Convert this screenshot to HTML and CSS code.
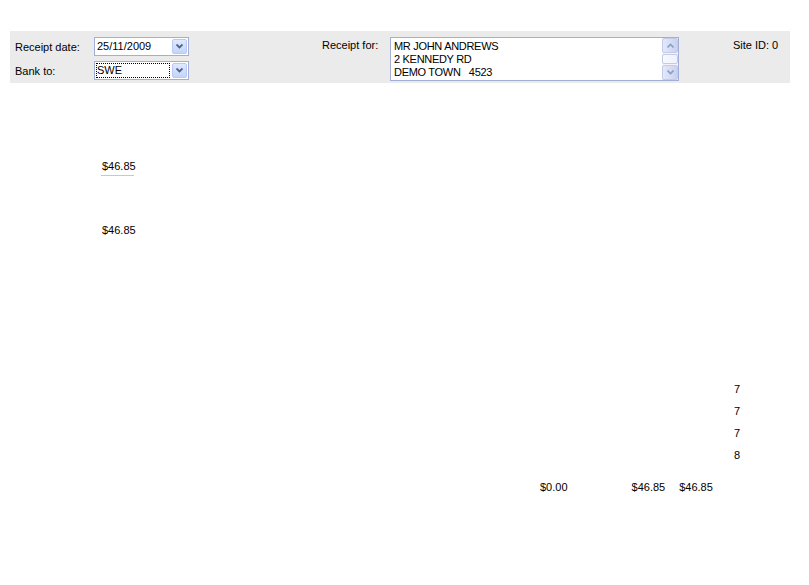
FILE: index.html
```html
<!DOCTYPE html>
<html>
<head>
<meta charset="utf-8">
<link rel="stylesheet" href="styles.css">
</head>
<body>
<div class="page">
  <div class="band">
    <div class="left-group">
      <div class="row">
        <span class="label">Receipt date:</span>
        <div class="combo">
          <span class="combo-text">25/11/2009</span>
          <span class="drop"><svg width="7" height="5" viewBox="0 0 7 5"><path d="M0.5 0.5 L3.5 3.5 L6.5 0.5" fill="none" stroke="#4d6185" stroke-width="1.8"/></svg></span>
        </div>
      </div>
      <div class="row">
        <span class="label">Bank to:</span>
        <div class="combo">
          <span class="combo-text focus">SWE</span>
          <span class="drop"><svg width="7" height="5" viewBox="0 0 7 5"><path d="M0.5 0.5 L3.5 3.5 L6.5 0.5" fill="none" stroke="#4d6185" stroke-width="1.8"/></svg></span>
        </div>
      </div>
    </div>
    <div class="mid-group">
      <span class="label">Receipt for:</span>
      <div class="memo">
        <div class="memo-text">MR JOHN ANDREWS<br>2 KENNEDY RD<br>DEMO TOWN&nbsp;&nbsp; 4523</div>
        <div class="scroll">
          <span class="sbtn"><svg width="7" height="5" viewBox="0 0 7 5"><path d="M0.5 4.5 L3.5 1.5 L6.5 4.5" fill="none" stroke="#8e9cc8" stroke-width="1.6"/></svg></span>
          <span class="thumb"></span>
          <span class="sbtn"><svg width="7" height="5" viewBox="0 0 7 5"><path d="M0.5 0.5 L3.5 3.5 L6.5 0.5" fill="none" stroke="#8e9cc8" stroke-width="1.6"/></svg></span>
        </div>
      </div>
    </div>
    <div class="site">Site ID: 0</div>
  </div>

  <div class="amounts">
    <div class="amt underline">$46.85</div>
    <div class="amt second">$46.85</div>
  </div>

  <div class="counts">
    <div>7</div>
    <div>7</div>
    <div>7</div>
    <div>8</div>
  </div>

  <div class="totals">
    <span class="t1">$0.00</span>
    <span class="t2">$46.85</span>
    <span class="t3">$46.85</span>
  </div>
</div>
</body>
</html>
```

FILE: styles.css
```css
html, body {
  margin: 0;
  padding: 0;
  background: #ffffff;
}
body {
  font-family: "Liberation Sans", Arial, sans-serif;
  font-size: 11px;
  color: #000;
}
.page {
  padding: 31px 19px 0 10px;
}
.band {
  background: #ebebeb;
  height: 52px;
  display: flex;
  box-sizing: border-box;
  padding: 6px 0 0 5px;
}
.left-group {
  display: flex;
  flex-direction: column;
  gap: 5px;
}
.row {
  display: flex;
  align-items: center;
  height: 19px;
}
.label {
  width: 79px;
  color: #000;
}
.combo {
  width: 95px;
  height: 19px;
  box-sizing: border-box;
  border: 1px solid #a3aed6;
  background: #fff;
  display: flex;
  align-items: center;
  padding: 0 1px 0 1px;
}
.combo-text {
  flex: 1;
  padding-left: 1px;
  line-height: 15px;
  height: 15px;
  box-sizing: border-box;
}
.combo-text.focus {
  outline: 1px dotted #000;
  outline-offset: -1px;
  margin-right: 2px;
  padding-left: 1px;
}
.drop {
  width: 15px;
  height: 15px;
  box-sizing: border-box;
  border: 1px solid #b9c9f3;
  border-radius: 2px;
  background: linear-gradient(#dfe9fe, #c3d4fa);
  display: flex;
  align-items: center;
  justify-content: center;
}
.mid-group {
  display: flex;
  margin-left: 133px;
}
.mid-group .label {
  width: 68px;
  padding-top: 2px;
}
.memo {
  width: 289px;
  height: 44px;
  box-sizing: border-box;
  border: 1px solid #a3aed6;
  background: #fff;
  display: flex;
}
.memo-text {
  flex: 1;
  padding: 2px 0 0 3px;
  line-height: 13px;
  letter-spacing: -0.3px;
}
.scroll {
  width: 16px;
  display: flex;
  flex-direction: column;
  background: #f3f3f8;
}
.sbtn {
  height: 15px;
  box-sizing: border-box;
  border: 1px solid #c3cbe8;
  border-radius: 2px;
  background: linear-gradient(90deg, #e3e9fa, #c9d2ef);
  display: flex;
  align-items: center;
  justify-content: center;
}
.thumb {
  flex: 1;
  margin: 1px 0;
  border: 1px solid #c3cbe8;
  border-radius: 2px;
  background: linear-gradient(90deg, #f9faff, #eef1fb);
}
.site {
  margin-left: 54px;
  padding-top: 2px;
}
.amounts {
  padding: 77px 0 0 91px;
}
.amt {
  width: 33px;
  line-height: 13px;
  text-indent: 1px;
}
.underline {
  border-bottom: 1px solid #c8c8c8;
  padding-bottom: 2px;
}
.second {
  margin-top: 48px;
}
.counts {
  padding: 146px 0 0 724px;
  display: flex;
  flex-direction: column;
  gap: 9px;
  line-height: 13px;
}
.totals {
  display: flex;
  padding: 19px 0 0 530px;
  line-height: 13px;
}
.t2 {
  margin-left: 64px;
}
.t3 {
  margin-left: 14px;
}
```
